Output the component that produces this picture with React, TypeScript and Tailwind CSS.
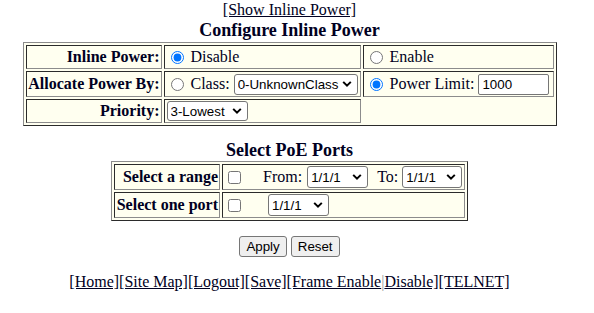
import React from "react";

function Chevron() {
  return (
    <svg
      className="pointer-events-none absolute right-[6px] top-1/2 -translate-y-1/2"
      width="10"
      height="7"
      viewBox="0 0 10 7"
    >
      <path d="M1.2 1.4L5 5.2L8.8 1.4" stroke="#000" strokeWidth="2" fill="none" />
    </svg>
  );
}

function Sel({ value, className }: { value: string; className: string }) {
  return (
    <span className={"relative inline-flex shrink-0 " + className}>
      <select
        defaultValue={value}
        className="h-full w-full appearance-none rounded-[3px] border border-[#767676] bg-white pl-[3px] pr-[18px] font-['Liberation_Sans',Arial,sans-serif] text-[13.33px] leading-[15px] text-black outline-none"
      >
        <option value={value}>{value}</option>
      </select>
      <Chevron />
    </span>
  );
}

const cell =
  "flex items-center border border-t-[#2b2b2b] border-l-[#2b2b2b] border-r-[#8c8c8c] border-b-[#8c8c8c] px-[1px]";
const label =
  "flex items-center justify-end border border-t-[#2b2b2b] border-l-[#2b2b2b] border-r-[#8c8c8c] border-b-[#8c8c8c] px-[1px] font-bold whitespace-nowrap";
const outer =
  "border border-t-[#8c8c8c] border-l-[#8c8c8c] border-r-[#2b2b2b] border-b-[#2b2b2b] bg-[#fffff0] p-[2px] grid gap-[2px]";

export default function App() {
  return (
    <div className="h-[313px] w-[594px] overflow-hidden bg-white font-['Liberation_Serif','Times_New_Roman',serif] text-[16px] leading-[18px] text-[#000022]">
      <div className="flex w-[579px] flex-col items-center">
        <a href="#" className="mt-[1px] h-[18px] underline">
          [Show Inline Power]
        </a>
        <div className="h-[23px] text-[18px] font-bold leading-[23px]">Configure Inline Power</div>

        <div className={outer + " grid-cols-[136px_197px_191px] grid-rows-[24px_26px_24px]"}>
          <div className={label}>Inline Power:</div>
          <div className={cell}>
            <input type="radio" name="ip" defaultChecked className="m-0 ml-[5px] mr-[7px] h-[13px] w-[13px] shrink-0" />
            <span>Disable</span>
          </div>
          <div className={cell}>
            <input type="radio" name="ip" className="m-0 ml-[5px] mr-[7px] h-[13px] w-[13px] shrink-0" />
            <span>Enable</span>
          </div>

          <div className={label}>Allocate Power By:</div>
          <div className={cell}>
            <input type="radio" name="ap" className="m-0 ml-[5px] mr-[7px] h-[13px] w-[13px] shrink-0" />
            <span>Class:</span>
            <Sel value="0-UnknownClass" className="ml-[4px] h-[21px] w-[124px]" />
          </div>
          <div className={cell}>
            <input type="radio" name="ap" defaultChecked className="m-0 ml-[5px] mr-[7px] h-[13px] w-[13px] shrink-0" />
            <span className="whitespace-nowrap">Power Limit:</span>
            <input
              defaultValue="1000"
              className="ml-[4px] h-[21px] w-[71px] rounded-[2px] border border-[#767676] bg-white px-[3px] font-['Liberation_Sans',Arial,sans-serif] text-[13.33px] text-black outline-none"
            />
          </div>

          <div className={label}>Priority:</div>
          <div className={cell}>
            <Sel value="3-Lowest" className="ml-[1px] h-[20px] w-[81px]" />
          </div>
        </div>

        <div className="mt-[14px] h-[21px] text-[18px] font-bold leading-[21px]">Select PoE Ports</div>

        <div className={outer + " grid-cols-[106px_243px] grid-rows-[26px_26px]"}>
          <div className={label}>Select a range</div>
          <div className={cell}>
            <input type="checkbox" className="m-0 ml-[4px] mr-[3px] h-[13px] w-[13px] shrink-0" />
            <span className="ml-[19px]">From:</span>
            <Sel value="1/1/1" className="ml-[5px] h-[22px] w-[61px]" />
            <span className="ml-[9px]">To:</span>
            <Sel value="1/1/1" className="ml-[4px] h-[22px] w-[60px]" />
          </div>
          <div className={label}>Select one port</div>
          <div className={cell}>
            <input type="checkbox" className="m-0 ml-[4px] mr-[3px] h-[13px] w-[13px] shrink-0" />
            <Sel value="1/1/1" className="ml-[24px] h-[22px] w-[61px]" />
          </div>
        </div>

        <div className="mt-[15px] flex gap-[4px]">
          <button className="h-[21px] rounded-[3px] border border-[#767676] bg-[#efefef] px-[6px] font-['Liberation_Sans',Arial,sans-serif] text-[13.33px] leading-[15px] text-black">
            Apply
          </button>
          <button className="h-[21px] rounded-[3px] border border-[#767676] bg-[#efefef] px-[6px] font-['Liberation_Sans',Arial,sans-serif] text-[13.33px] leading-[15px] text-black">
            Reset
          </button>
        </div>

        <div className="mt-[16px] h-[18px] whitespace-nowrap">
          <a href="#" className="underline">[Home]</a>
          <a href="#" className="underline">[Site Map]</a>
          <a href="#" className="underline">[Logout]</a>
          <a href="#" className="underline">[Save]</a>
          <a href="#" className="underline">[Frame Enable</a>
          <span className="text-[#9a9a9a]">|</span>
          <a href="#" className="underline">Disable]</a>
          <a href="#" className="underline">[TELNET]</a>
        </div>
      </div>
    </div>
  );
}
